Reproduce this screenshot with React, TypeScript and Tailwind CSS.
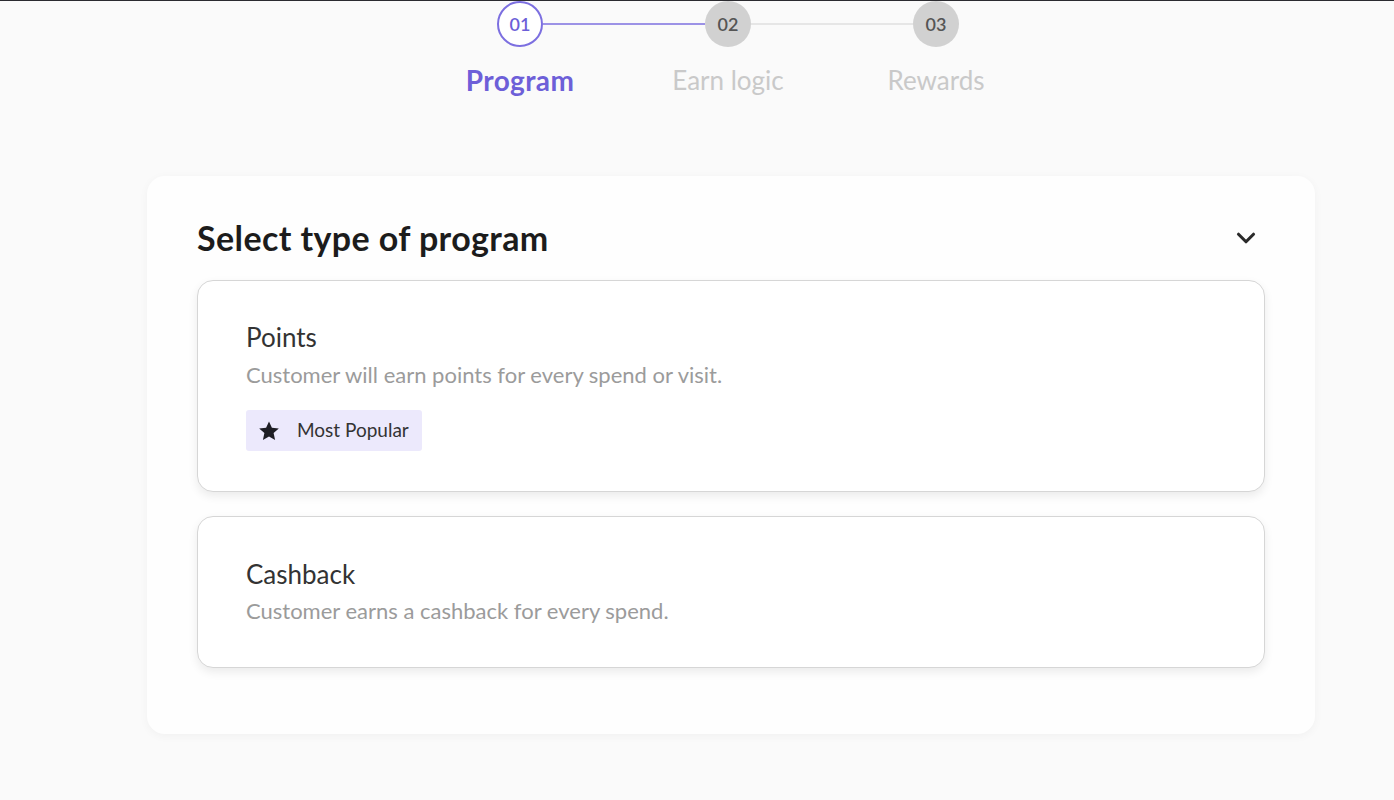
import { ChevronDown } from 'lucide-react'

const steps = [
  { num: '01', label: 'Program', active: true },
  { num: '02', label: 'Earn logic', active: false },
  { num: '03', label: 'Rewards', active: false },
]

function Stepper() {
  return (
    <div className="flex justify-center pr-[6px]">
      <div className="flex items-start">
        {steps.map((s, i) => (
          <div key={s.num} className="flex items-start">
            <div className="flex flex-col items-center w-[46px]">
              <div
                className={[
                  'size-[46px] rounded-full flex items-center justify-center text-[18px] font-semibold',
                  s.active
                    ? 'border-2 border-[#7c6fe0] text-[#6d5fd8] bg-white'
                    : 'bg-[#d1d1d1] text-[#555]',
                ].join(' ')}
              >
                {s.num}
              </div>
              <div
                className={[
                  'mt-[17px] whitespace-nowrap leading-[32px]',
                  s.active ? 'text-[28px] font-bold text-[#6d5fd8] tracking-[0.4px]' : 'text-[26px] text-[#c9c9c9]',
                ].join(' ')}
              >
                {s.label}
              </div>
            </div>
            {i < steps.length - 1 && (
              <div
                className={[
                  'mt-[22px] h-[2px] w-[162px]',
                  i === 0 ? 'bg-[#9c92e6]' : 'bg-[#e6e6e6]',
                ].join(' ')}
              />
            )}
          </div>
        ))}
      </div>
    </div>
  )
}

function OptionCard({ title, desc, popular }: { title: string; desc: string; popular?: boolean }) {
  return (
    <div
      className={[
        'rounded-2xl border border-[#d6d6d6] bg-white shadow-[0_4px_10px_rgba(0,0,0,0.08)] px-12',
        popular ? 'pt-[40px] pb-[40px]' : 'pt-[41px] pb-[42px]',
      ].join(' ')}
    >
      <div className="text-[26px] leading-[32px] text-[#333]">{title}</div>
      <div className={['text-[22px] leading-[28px] text-[#9b9b9b]', popular ? 'mt-[8px]' : 'mt-[7px]'].join(' ')}>
        {desc}
      </div>
      {popular && (
        <div className="mt-[21px] inline-flex items-center gap-[16px] h-[41px] pl-[11px] pr-[13px] rounded-[3px] bg-[#ece9fc]">
          <svg viewBox="0 0 24 24" className="size-[24px]" fill="#1e1e24">
            <path d="M12 2.5l2.9 6.3 6.9.7-5.2 4.6 1.5 6.8L12 17.4l-6.1 3.5 1.5-6.8-5.2-4.6 6.9-.7z" />
          </svg>
          <span className="text-[19px] text-[#333]">Most Popular</span>
        </div>
      )}
    </div>
  )
}

export default function App() {
  return (
    <div className="min-h-[800px] bg-[#fafafa] border-t border-[#2b2b30] pl-[68px] font-['Lato','Noto_Sans',sans-serif]">
      <Stepper />
      <div className="mx-auto mt-[80px] w-[1168px] rounded-[18px] bg-[#fefefe] shadow-[0_2px_10px_rgba(0,0,0,0.04)] pt-[40px] pb-[66px] px-[50px]">
        <div className="flex items-center justify-between">
          <h1 className="text-[34px] leading-[44px] font-bold text-[#1c1c1c] tracking-[0.4px]">Select type of program</h1>
          <ChevronDown className="size-[30px] text-[#2a2a2a] mr-[4px]" strokeWidth={2.5} />
        </div>
        <div className="mt-[20px] flex flex-col gap-[24px]">
          <OptionCard title="Points" desc="Customer will earn points for every spend or visit." popular />
          <OptionCard title="Cashback" desc="Customer earns a cashback for every spend." />
        </div>
      </div>
    </div>
  )
}
